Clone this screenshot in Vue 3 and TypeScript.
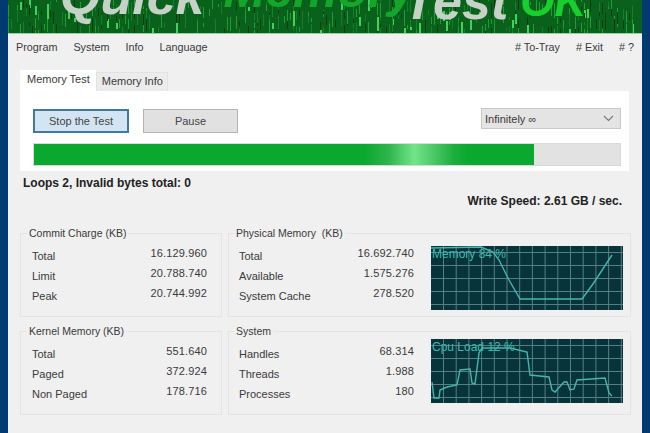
<template>
  <div class="screen">
    <div class="window">
      <div class="banner">
        <svg class="rain" width="634" height="33" viewBox="0 0 634 33">
          <rect v-for="(d, i) in rain" :key="i" :x="d.x" :y="d.y" :width="d.w" :height="d.h" :fill="d.c" />
        </svg>
        <span class="logo grey">Quick</span>
        <span class="logo green">Memory</span>
        <span class="logo grey test">Test</span>
        <span class="logo bright">OK</span>
      </div>
      <div class="body">
        <nav class="menu">
          <span v-for="m in menuLeft" :key="m">{{ m }}</span>
          <span class="spring"></span>
          <span v-for="m in menuRight" :key="m">{{ m }}</span>
        </nav>
        <div class="tabs">
          <span class="tab active">Memory Test</span>
          <span class="tab">Memory Info</span>
        </div>
        <div class="tabpage">
          <div class="controls">
            <button class="btn primary">Stop the Test</button>
            <button class="btn">Pause</button>
            <div class="select">
              <span>Infinitely ∞</span>
              <svg width="11" height="7" viewBox="0 0 11 7"><path d="M1 1l4.5 4.5L10 1" fill="none" stroke="#777" stroke-width="1.1" /></svg>
            </div>
          </div>
          <div class="progress"><div class="fill"></div></div>
        </div>
        <div class="loops">Loops 2, Invalid bytes total: 0</div>
        <div class="speed">Write Speed: 2.61 GB / sec.</div>
        <div class="groups">
          <fieldset v-for="g in groups" :key="g.title" class="group" :class="{ wide: g.graph }">
            <legend>{{ g.title }}</legend>
            <div class="group-inner">
              <div class="rows">
                <div v-for="r in g.rows" :key="r[0]" class="row">
                  <span>{{ r[0] }}</span><span class="value">{{ r[1] }}</span>
                </div>
              </div>
              <div v-if="g.graph" class="graph">
                <svg width="192" height="64" viewBox="0 0 192 64">
                  <path :d="gridPath" fill="none" stroke="#557f82" stroke-width="1" />
                  <polyline :points="g.graph.points" fill="none" stroke="#45b5ae" stroke-width="1.4" />
                </svg>
                <span class="graph-label">{{ g.graph.label }}</span>
              </div>
            </div>
          </fieldset>
        </div>
      </div>
    </div>
  </div>
</template>

<script setup lang="ts">
const menuLeft = ['Program', 'System', 'Info', 'Language']
const menuRight = ['# To-Tray', '# Exit', '# ?']

type Group = {
  title: string
  rows: [string, string][]
  graph?: { label: string; points: string }
}

const groups: Group[] = [
  {
    title: 'Commit Charge (KB)',
    rows: [['Total', '16.129.960'], ['Limit', '20.788.740'], ['Peak', '20.744.992']],
  },
  {
    title: 'Physical Memory  (KB)',
    rows: [['Total', '16.692.740'], ['Available', '1.575.276'], ['System Cache', '278.520']],
    graph: { label: 'Memory 84 %', points: '0,2 50,1 62,6 68,14 78,34 89,53 151,53 162,38 181,9' },
  },
  {
    title: 'Kernel Memory (KB)',
    rows: [['Total', '551.640'], ['Paged', '372.924'], ['Non Paged', '178.716']],
  },
  {
    title: 'System',
    rows: [['Handles', '68.314'], ['Threads', '1.988'], ['Processes', '180']],
    graph: {
      label: 'Cpu Load 12 %',
      points: '1,43 3,59 8,59 9,51 16,48 26,46 29,31 39,30 41,44 44,45 48,14 51,9 79,9 96,13 99,36 118,38 121,51 124,53 133,43 136,43 139,51 143,50 146,41 174,39 178,54 181,57',
    },
  },
]

// 15 columns by 5 rows, same pitch as the reference's meter
const gridPath = (() => {
  let d = ''
  for (let x = 12.5; x < 192; x += 12.7) d += `M${x.toFixed(1)} 0V64`
  for (let y = 6.5; y < 64; y += 13) d += `M0 ${y.toFixed(1)}H192`
  return d
})()

// matrix rain behind the logo, seeded so it stays the same on every load
let seed = 92
const rnd = () => {
  seed = (seed * 16807) % 2147483647
  return seed / 2147483647
}
const rain = Array.from({ length: 420 }, () => {
  const r = rnd()
  return {
    x: Math.round(rnd() * 210) * 3,
    y: Math.round(rnd() * 33) - 3,
    w: r > 0.9 ? 2 : 1,
    h: 3 + Math.round(rnd() * 12),
    c: r > 0.9 ? '#45cf5c' : r > 0.55 ? '#1f9d33' : r > 0.25 ? '#12802a' : '#053f10',
  }
})
</script>

<style>
body {
  margin: 0;
  background: #003a70;
}
</style>

<style scoped>
.screen {
  width: 650px;
  height: 433px;
  overflow: hidden;
  padding: 0 8px;
  box-sizing: border-box;
  background: #003a70;
  font-family: "Liberation Sans", Arial, sans-serif;
  color: #3a3a3a;
}

.window {
  height: 433px;
  background: #f0f0f0;
}

.banner {
  position: relative;
  height: 33px;
  display: flex;
  align-items: flex-start;
  overflow: hidden;
  padding-left: 52px;
  background: #0a611b;
  border-bottom: 1px solid #9ccca4;
}

.rain {
  position: absolute;
  left: 0;
  top: 0;
  filter: blur(0.7px);
}

.logo {
  position: relative;
  flex: none;
  font-size: 52px;
  line-height: 50px;
  font-weight: 700;
  font-style: italic;
  margin-top: -29px;
}

.grey { color: #c6d2c7; }
.green { color: #14a52a; margin-left: 19px; margin-top: -35px; font-size: 50px; }
.test { margin-left: -12px; margin-top: -24px; }
.bright { color: #18cf2e; margin-left: 12px; margin-top: -24px; font-size: 44px; }

.body {
  padding: 0 8px;
}

.menu {
  display: flex;
  gap: 16px;
  padding-top: 7px;
  height: 14px;
  font-size: 10.8px;
  line-height: 13px;
}

.spring { flex: 1; }

.tabs {
  display: flex;
  margin: 15px 0 0 4px;
  height: 21px;
  align-items: flex-end;
  font-size: 11px;
}

.tab {
  padding: 0 4px 0 5px;
  height: 18px;
  line-height: 17px;
  background: #ececec;
  border: 1px solid #e2e2e2;
  border-bottom: 0;
}

.tab.active {
  height: 21px;
  line-height: 18px;
  padding: 0 6px 0 7px;
  background: #fff;
  border: 0;
}

.tabpage {
  margin: 0 5px 0 4px;
  height: 80px;
  padding: 17px 8px 0 13px;
  box-sizing: border-box;
  background: #fff;
}

.controls {
  display: flex;
  align-items: flex-start;
  gap: 14px;
  height: 25px;
}

.btn {
  width: 95px;
  height: 24px;
  margin-top: 1px;
  font: 11px "Liberation Sans", Arial, sans-serif;
  color: #444;
  background: #e1e1e1;
  border: 1px solid #b4b4b4;
  padding: 0;
}

.btn.primary {
  width: 96px;
  background: #d3e5f3;
  border: 2px solid #41799f;
}

.select {
  margin-left: auto;
  width: 140px;
  height: 21px;
  box-sizing: border-box;
  padding: 0 6px 0 3px;
  display: flex;
  justify-content: space-between;
  align-items: center;
  font-size: 11px;
  background: #e4e4e4;
  border: 1px solid #c8c8c8;
}

.progress {
  height: 23px;
  margin-top: 10px;
  background: #e2e2e2;
  border: 1px solid #d9d9d9;
  box-sizing: border-box;
}

.fill {
  width: 500px;
  height: 100%;
  background: linear-gradient(90deg, #0aa82e 0 66%, #2fb54d 71%, #72e58a 76%, #4cc767 80%, #1bae3c 84%, #0aa82e 87%);
}

.loops {
  margin: 5px 0 0 7px;
  font-size: 12px;
  line-height: 14px;
  font-weight: 700;
  color: #222;
}

.speed {
  margin: 4px 12px 0 0;
  text-align: right;
  font-size: 12px;
  line-height: 14px;
  font-weight: 700;
  color: #222;
}

.groups {
  display: grid;
  grid-template-columns: 202px 1fr;
  column-gap: 6px;
  row-gap: 8px;
  margin: 19px 3px 0 4px;
}

.group {
  margin: 0;
  padding: 7px 14px 0 11px;
  height: 90px;
  min-width: 0;
  box-sizing: border-box;
  border: 1px solid #e4e4e4;
}

.group.wide {
  padding: 7px 7px 0 10px;
}

legend {
  font-size: 10.5px;
  line-height: 12px;
  padding: 0 2px;
  margin-left: -5px;
  white-space: pre;
}

.group-inner {
  display: flex;
  gap: 17px;
}

.rows {
  flex: 1;
  min-width: 0;
}

.row {
  display: flex;
  justify-content: space-between;
  align-items: flex-start;
  height: 20px;
  font-size: 11px;
  line-height: 20px;
}

.value {
  margin-top: -3px;
  letter-spacing: 0.15px;
}

.graph {
  position: relative;
  width: 192px;
  height: 64px;
  flex: none;
  background: #06343a;
}

.group:last-child .graph {
  margin-top: -5px;
}

.graph svg {
  display: block;
}

.graph-label {
  position: absolute;
  left: 1px;
  top: 2px;
  font-size: 12px;
  line-height: 13px;
  color: #3db8b0;
}
</style>
